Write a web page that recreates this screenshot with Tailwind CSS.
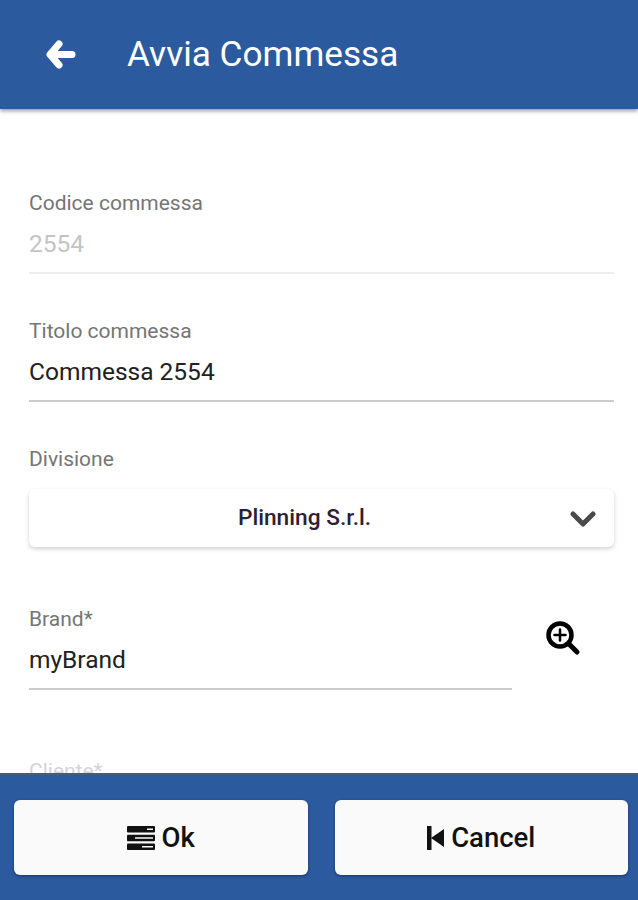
<!DOCTYPE html>
<html lang="it">
<head>
<meta charset="utf-8">
<title>Avvia Commessa</title>
<script src="https://cdn.jsdelivr.net/npm/@tailwindcss/browser@4"></script>
</head>
<body class="bg-white">
<div class="flex h-[900px] w-[638px] flex-col overflow-hidden bg-white font-['Roboto',sans-serif]">
  <header class="z-10 flex h-[109px] shrink-0 items-center bg-[#2b5a9e] pl-[45px] shadow-[0_2px_4px_rgba(0,0,0,0.4)]">
    <svg class="h-[32px] w-[32px]" viewBox="0 0 32 32" fill="none" stroke="white" stroke-width="7" stroke-linecap="round" stroke-linejoin="round"><path d="M14 5 L5 15.5 L14 26"/><path d="M6 15.5 H27"/></svg>
    <h1 class="ml-[50px] text-[35.2px] font-normal leading-none text-white">Avvia Commessa</h1>
  </header>
  <main class="relative flex-1 overflow-hidden pl-[29px] pr-[24px] pt-[82px]">
    <div class="border-b-2 border-[#eeeeee] pb-[13px]">
      <div class="text-[21px] leading-[24px] text-[#757575]">Codice commessa</div>
      <div class="mt-[14px] text-[24.5px] leading-[30px] text-[#c4c4c4]">2554</div>
    </div>
    <div class="mt-[45px] border-b-2 border-[#cccccc] pb-[13px]">
      <div class="text-[21px] leading-[24px] text-[#757575]">Titolo commessa</div>
      <div class="mt-[14px] text-[24.5px] leading-[30px] text-[#212121]">Commessa 2554</div>
    </div>
    <div class="mt-[45px] text-[21px] leading-[24px] text-[#757575]">Divisione</div>
    <div class="relative mt-[18px] flex h-[58px] items-center justify-center rounded-[6px] bg-white pr-[34px] shadow-[0_2px_4px_rgba(0,0,0,0.18)]">
      <span class="text-[22.7px] font-medium leading-none text-[#2a2233]">Plinning S.r.l.</span>
      <svg class="absolute right-[18px] top-[21px] h-[18px] w-[26px]" viewBox="0 0 26 18" fill="none" stroke="#4a4a4a" stroke-width="5" stroke-linecap="round" stroke-linejoin="round"><path d="M3 4 L13 14 L23 4"/></svg>
    </div>
    <div class="mt-[60px] flex items-start">
      <div class="w-[483px] shrink-0 border-b-2 border-[#cccccc] pb-[13px]">
        <div class="text-[21px] leading-[24px] text-[#757575]">Brand*</div>
        <div class="mt-[14px] text-[24.5px] leading-[30px] text-[#212121]">myBrand</div>
      </div>
      <svg class="ml-[33px] mt-[13px] h-[36px] w-[36px]" viewBox="0 0 36 36" fill="none" stroke="black" stroke-linecap="round"><circle cx="15" cy="15" r="11.5" stroke-width="4.5"/><path d="M24 24 L32 32" stroke-width="5"/><path d="M15 9.5 V20.5 M9.5 15 H20.5" stroke-width="2.5"/></svg>
    </div>
    <div class="mt-[69px] text-[21px] leading-[24px] text-[#d4d4d4]">Cliente*</div>
  </main>
  <footer class="z-10 flex h-[127px] shrink-0 gap-[27px] border-t-2 border-[#4a5a70] bg-[#2b5a9e] pl-[14px] pr-[10px] pt-[25px]">
    <button class="flex h-[75px] flex-1 items-center justify-center gap-[7px] rounded-[6px] bg-[#fafafa] text-[27.5px] font-medium leading-none text-[#111111] shadow-[0_1px_3px_rgba(0,0,0,0.4)]">
      <svg class="h-[24px] w-[28px]" viewBox="0 0 28 24" fill="#111111"><rect x="0" y="0" width="28" height="6.5" rx="1"/><rect x="0" y="8.7" width="28" height="6.5" rx="1"/><rect x="0" y="17.5" width="28" height="6.5" rx="1"/><path d="M20 3.2 H26 M8 12 H26 M15 20.7 H26" stroke="#fafafa" stroke-width="1.6"/></svg>
      Ok
    </button>
    <button class="flex h-[75px] flex-1 items-center justify-center gap-[7px] rounded-[6px] bg-[#fafafa] text-[27.5px] font-medium leading-none text-[#111111] shadow-[0_1px_3px_rgba(0,0,0,0.4)]">
      <svg class="h-[24px] w-[17px]" viewBox="0 0 17 24" fill="#111111"><rect x="0" y="0" width="4.5" height="24"/><path d="M17 3 V21 L4 12 Z"/></svg>
      Cancel
    </button>
  </footer>
</div>
</body>
</html>
